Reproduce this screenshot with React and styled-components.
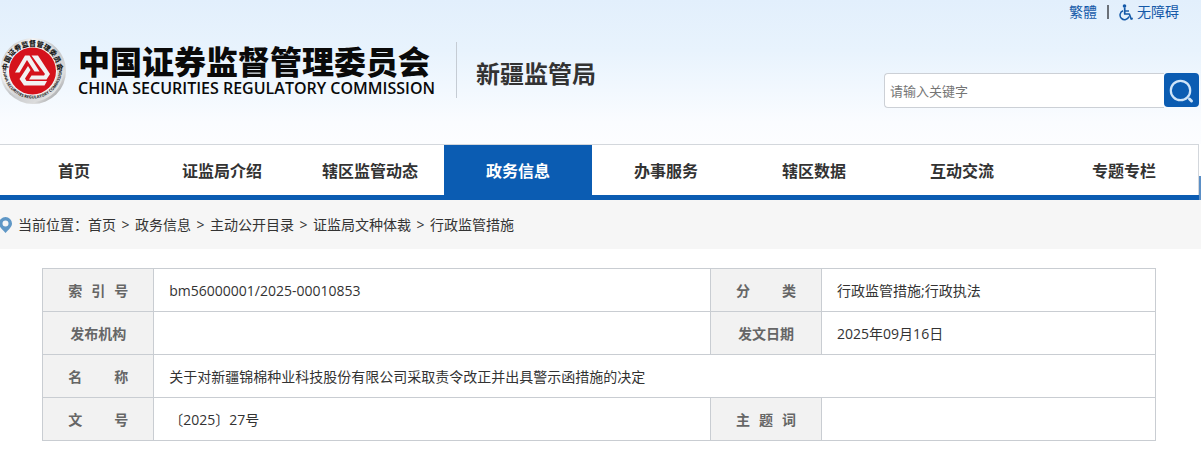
import React from "react";
import styled, { createGlobalStyle } from "styled-components";

const GlobalStyle = createGlobalStyle`
  * {
    box-sizing: border-box;
  }
  body {
    margin: 0;
    background-color: #fff;
    color: #333;
    font-family: "Open Sans", "Noto Sans CJK SC", sans-serif;
    font-size: 14px;
    line-height: 20px;
  }
  a {
    color: inherit;
    text-decoration: none;
  }
`;

const Page = styled.div`
  position: relative;
  overflow: hidden;
`;

const Header = styled.header`
  background: linear-gradient(#e2effc, #e8f3fd 35%, #fafcff 85%, #fcfdff);
  padding-bottom: 36px;
`;

const TopLinks = styled.div`
  display: flex;
  justify-content: flex-end;
  align-items: center;
  gap: 10px;
  height: 24px;
  padding-right: 22px;
  color: #1459a8;
`;

const TopLink = styled.a`
  display: flex;
  align-items: center;
  gap: 4px;
`;

const TopSeparator = styled.span`
  width: 2px;
  height: 14px;
  background-color: #6a7078;
`;

const Brand = styled.div`
  display: flex;
  align-items: flex-start;
  padding: 14px 2px 0 0;
`;

const SealIcon = styled.svg`
  flex: none;
  width: 66px;
  height: 66px;
`;

const Title = styled.h1`
  display: flex;
  flex-direction: column;
  margin: 8px 21px 0 12px;
  color: #0a0a0a;
  white-space: nowrap;
`;

const TitleMain = styled.span`
  font-size: 32px;
  font-weight: 900;
  line-height: 32px;
`;

const TitleSub = styled.span`
  font-size: 16px;
  font-weight: 600;
  line-height: 20px;
`;

const Bureau = styled.div`
  height: 56px;
  margin-top: 4px;
  padding: 4px 0 0 19px;
  border-left: 1px solid #c5ccd4;
  font-size: 24px;
  font-weight: 700;
  line-height: 56px;
  white-space: nowrap;
`;

const Search = styled.form`
  display: flex;
  margin: 35px 0 0 auto;
`;

const SearchInput = styled.input`
  width: 280px;
  height: 35px;
  padding: 0 5px;
  border: 1px solid #ccd0d6;
  border-right: 0;
  border-radius: 4px 0 0 4px;
  background-color: #fff;
  font-family: inherit;
  font-size: 13px;
  outline: none;

  &::placeholder {
    color: #757575;
    opacity: 1;
  }
`;

const SearchButton = styled.button`
  width: 35px;
  height: 34px;
  padding: 0;
  border: 0;
  border-radius: 4px;
  background-color: #0b5cb2;
  cursor: pointer;

  svg {
    display: block;
  }
`;

const Nav = styled.nav`
  display: flex;
  margin-right: 2px;
  border-top: 1px solid #d3d7dc;
  border-right: 1px solid #d3d7dc;
  background-color: #fff;
`;

const NavLink = styled.a`
  flex: 0 1 148px;
  height: 50px;
  background-color: ${({ $active }) => ($active ? "#0b5cb2" : "transparent")};
  color: ${({ $active }) => ($active ? "#fff" : "#333")};
  font-size: 16px;
  font-weight: 700;
  line-height: 52px;
  text-align: center;
  white-space: nowrap;

  &:last-child {
    margin-left: auto;
  }
`;

const Breadcrumb = styled.nav`
  display: flex;
  align-items: center;
  height: 54px;
  border-top: 5px solid #0b5cb2;
  background-color: #f6f6f6;
`;

const PinIcon = styled.svg`
  width: 12px;
  height: 16px;
  margin-right: 6px;
`;

const Arrow = styled.span`
  width: 19px;
  text-align: center;
`;

const Content = styled.main`
  padding: 19px 45px 14px 42px;
`;

const InfoTable = styled.table`
  width: 100%;
  border-collapse: collapse;
  table-layout: fixed;
`;

const LabelCell = styled.th`
  height: 43px;
  padding: 2px 0 0;
  border: 1px solid #c9cdd2;
  background-color: #f2f2f2;
  color: #666;
  font-weight: 700;
`;

const Label = styled.span`
  display: inline-block;
  width: ${({ $spread }) => ($spread ? "60px" : "auto")};
  text-align-last: ${({ $spread }) => ($spread ? "justify" : "center")};
`;

const ValueCell = styled.td`
  height: 43px;
  padding: 2px 15px 0;
  border: 1px solid #c9cdd2;
`;

const SideTab = styled.div`
  position: absolute;
  top: 176px;
  right: 0;
  width: 2px;
  height: 24px;
  background-color: #5b8fc6;
`;

const navItems = [
  "首页",
  "证监局介绍",
  "辖区监管动态",
  "政务信息",
  "办事服务",
  "辖区数据",
  "互动交流",
  "专题专栏"
];

const crumbs = [
  "首页",
  "政务信息",
  "主动公开目录",
  "证监局文种体裁",
  "行政监管措施"
];

const rows = [
  [
    { label: "索 引 号", value: "bm56000001/2025-00010853" },
    { label: "分 类", value: "行政监管措施;行政执法" }
  ],
  [
    { label: "发布机构", value: "" },
    { label: "发文日期", value: "2025年09月16日" }
  ],
  [
    {
      label: "名 称",
      value: "关于对新疆锦棉种业科技股份有限公司采取责令改正并出具警示函措施的决定"
    }
  ],
  [
    { label: "文 号", value: "〔2025〕27号" },
    { label: "主 题 词", value: "" }
  ]
];

const Seal = () => (
  <SealIcon viewBox="0 0 66 66" aria-hidden="true">
    <defs>
      <linearGradient id="metal" x1="0" y1="0" x2="1" y2="1">
        <stop offset="0" stopColor="#9a9da1" />
        <stop offset="0.25" stopColor="#f4f4f4" />
        <stop offset="0.5" stopColor="#c4c6c9" />
        <stop offset="0.75" stopColor="#dcdcdc" />
        <stop offset="1" stopColor="#75787c" />
      </linearGradient>
      <linearGradient id="ring" x1="0" y1="0" x2="1" y2="1">
        <stop offset="0" stopColor="#d4d5d7" />
        <stop offset="0.3" stopColor="#f3f3f3" />
        <stop offset="0.6" stopColor="#cfd0d2" />
        <stop offset="1" stopColor="#ececec" />
      </linearGradient>
      <path id="arcTop" d="M7.5 33 A25 25 0 0 1 57.5 33" />
      <path id="arcBottom" d="M3 31 A29.5 29.5 0 0 0 62 31" />
    </defs>
    <circle cx="33" cy="33" r="33" fill="url(#metal)" />
    <circle cx="32.5" cy="32.5" r="31" fill="url(#ring)" />
    <circle cx="32.5" cy="33" r="24.5" fill="#f5f5f5" />
    <circle cx="32.5" cy="33" r="23.5" fill="#d5121b" />
    <text fontSize="7" fontWeight="900" fill="#1c1c1c">
      <textPath href="#arcTop" startOffset="50%" textAnchor="middle">
        中国证券监督管理委员会
      </textPath>
    </text>
    <text fontSize="4" fontWeight="700" fill="#1c1c1c">
      <textPath href="#arcBottom" startOffset="50%" textAnchor="middle">
        CHINA SECURITIES REGULATORY COMMISSION
      </textPath>
    </text>
    <g fill="#f2f2f2">
      <path d="M25 17.5 H29.5 L39.5 33.5 H34.5 L27 22 L19.5 34.5 H15 Z" />
      <path d="M31.5 17.5 H38 L50 36 L46.5 41.5 H29 L31.5 37.5 H44 L45 36 Z" />
      <path d="M28 28 L30.5 32 L25 40.5 L26.5 43 H47 L44.5 47.5 H24 L19.5 41 Z" />
    </g>
  </SealIcon>
);

const AccessIcon = () => (
  <svg width="14" height="17" viewBox="0 0 14 17" aria-hidden="true">
    <circle cx="5.5" cy="2" r="1.8" fill="currentColor" />
    <g fill="none" stroke="currentColor" strokeLinejoin="round">
      <path d="M5.7 3.5 V10 H10.3 L12.2 15 L13.8 14.4" strokeWidth="1.7" />
      <path d="M6 7 H10" strokeWidth="1.4" />
      <path d="M4 6.8 A4.6 4.6 0 1 0 10 12.6" strokeWidth="1.5" />
    </g>
  </svg>
);

const App = () => {
  return (
    <>
      <GlobalStyle />
      <Page>
        <Header>
          <TopLinks>
            <TopLink href="#">繁體</TopLink>
            <TopSeparator />
            <TopLink href="#">
              <AccessIcon />
              无障碍
            </TopLink>
          </TopLinks>
          <Brand>
            <Seal />
            <Title>
              <TitleMain>中国证券监督管理委员会</TitleMain>
              <TitleSub>CHINA SECURITIES REGULATORY COMMISSION</TitleSub>
            </Title>
            <Bureau>新疆监管局</Bureau>
            <Search onSubmit={(e) => e.preventDefault()}>
              <SearchInput
                type="text"
                placeholder="请输入关键字"
                aria-label="请输入关键字"
              />
              <SearchButton type="submit" aria-label="搜索">
                <svg width="35" height="34" viewBox="0 0 35 34">
                  <circle
                    cx="16.5"
                    cy="17.5"
                    r="9.7"
                    fill="none"
                    stroke="#cfe4f8"
                    strokeWidth="2.2"
                  />
                  <path
                    d="M25.5 26 L27.5 28"
                    stroke="#cfe4f8"
                    strokeWidth="3"
                    strokeLinecap="round"
                  />
                </svg>
              </SearchButton>
            </Search>
          </Brand>
        </Header>
        <Nav>
          {navItems.map((item) => (
            <NavLink key={item} href="#" $active={item === "政务信息"}>
              {item}
            </NavLink>
          ))}
        </Nav>
        <Breadcrumb>
          <PinIcon viewBox="0 0 12 16" aria-hidden="true">
            <path
              fill="#5f97c6"
              fillRule="evenodd"
              d="M5.5 0 A6.5 6.5 0 0 1 12 6.5 C12 10 8.5 12.5 5.5 16 C2.5 12.5 -1 10 -1 6.5 A6.5 6.5 0 0 1 5.5 0 Z M5.5 3.5 A3 3 0 1 0 5.5 9.5 A3 3 0 1 0 5.5 3.5 Z"
            />
          </PinIcon>
          <span>当前位置：</span>
          {crumbs.map((crumb, index) => (
            <React.Fragment key={crumb}>
              {index > 0 && <Arrow>&gt;</Arrow>}
              <a href="#">{crumb}</a>
            </React.Fragment>
          ))}
        </Breadcrumb>
        <Content>
          <InfoTable>
            <colgroup>
              <col width="10%" />
              <col width="50%" />
              <col width="10%" />
              <col width="30%" />
            </colgroup>
            <tbody>
              {rows.map((cells) => (
                <tr key={cells[0].label}>
                  {cells.map(({ label, value }) => (
                    <React.Fragment key={label}>
                      <LabelCell scope="row">
                        <Label $spread={label.includes(" ")}>{label}</Label>
                      </LabelCell>
                      <ValueCell colSpan={cells.length === 1 ? 3 : 1}>
                        {value}
                      </ValueCell>
                    </React.Fragment>
                  ))}
                </tr>
              ))}
            </tbody>
          </InfoTable>
        </Content>
        <SideTab />
      </Page>
    </>
  );
};

export default App;
